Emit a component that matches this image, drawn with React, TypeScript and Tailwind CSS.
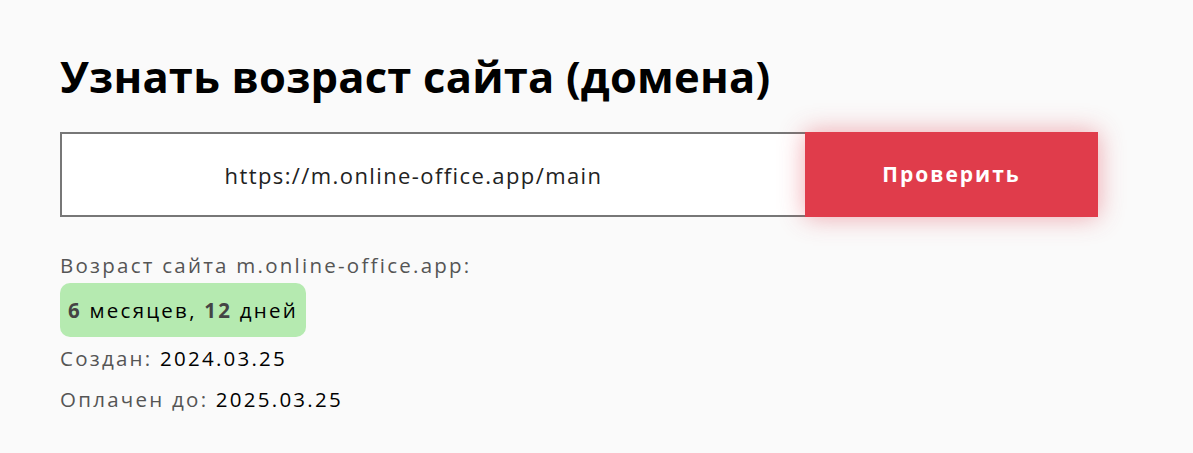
export default function App() {
    const url = "https://m.online-office.app/main";

    return (
        <div className="min-h-[453px] bg-[#fafafa] px-[60px] pt-[48px] font-['Open_Sans',sans-serif] text-[#222]">
            <h1 className="text-[43.5px] font-bold leading-[58px] tracking-[0.2px] text-black">
                Узнать возраст сайта (домена)
            </h1>

            {/* Form */}
            <div className="mt-[26px] flex w-[1038px]">
                <input
                    type="text"
                    defaultValue={url}
                    className="h-[85px] flex-1 border-2 border-r-0 border-[#777] bg-white pr-[40px] text-center text-[22px] tracking-[1.4px] text-[#222] outline-none"
                />
                <button className="h-[85px] w-[293px] bg-[#e03c4b] text-[21px] font-bold tracking-[2px] text-white shadow-[0_0_24px_rgba(224,60,75,0.45)]">
                    Проверить
                </button>
            </div>

            {/* Result */}
            <div className="mt-[33px] text-[20.5px] tracking-[2.25px] text-[#555]">
                <div className="leading-[30px]">Возраст сайта m.online-office.app:</div>
                <div className="mt-[3px] inline-flex h-[54px] items-center rounded-[10px] bg-[#b5eab0] px-[8px] text-black">
                    <b className="font-bold text-[#444]">6</b>&nbsp;месяцев,&nbsp;<b className="font-bold text-[#444]">12</b>&nbsp;дней
                </div>
                <div className="mt-[5px] leading-[32px]">
                    Создан: <span className="text-black">2024.03.25</span>
                </div>
                <div className="mt-[9px] leading-[32px]">
                    Оплачен до: <span className="text-black">2025.03.25</span>
                </div>
            </div>
        </div>
    );
}
